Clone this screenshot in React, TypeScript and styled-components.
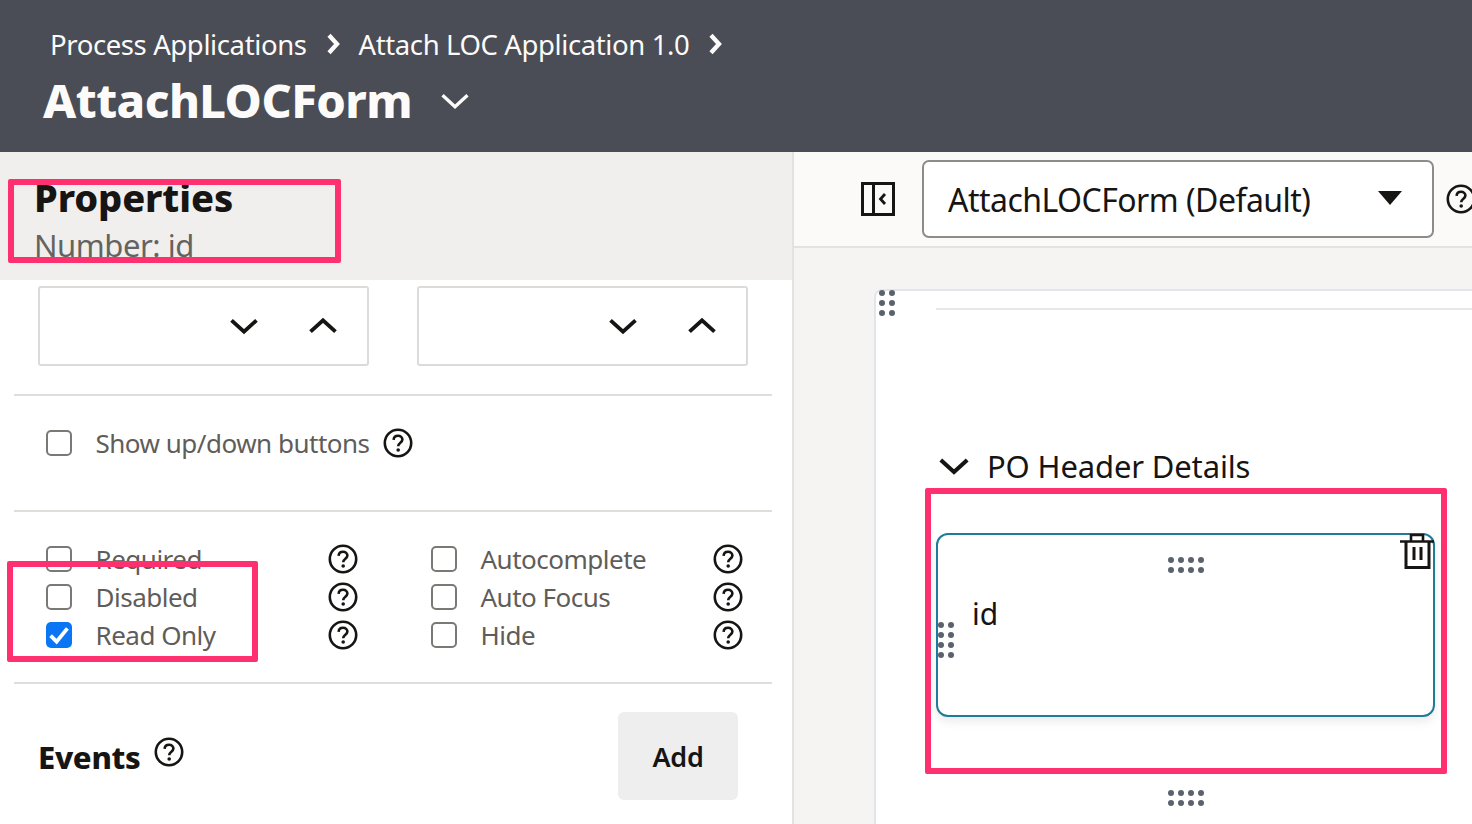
import React from 'react';
import styled, { createGlobalStyle } from 'styled-components';

const GlobalStyle = createGlobalStyle`
  html, body {
    margin: 0;
    padding: 0;
    background: #fff;
    font-family: "Noto Sans", "Open Sans", sans-serif;
    color: #161513;
  }
`;

const Page = styled.div`
  position: relative;
  width: 1472px;
  height: 824px;
  overflow: hidden;
  display: flex;
  flex-direction: column;
`;

const Header = styled.header`
  flex: 0 0 152px;
  box-sizing: border-box;
  height: 152px;
  background: #4a4d55;
  color: #fcfbfa;
  padding: 23px 0 0 43px;
`;

const Crumbs = styled.div`
  display: flex;
  align-items: center;
  height: 42px;
  padding-left: 7px;
  font-size: 27.5px;
  letter-spacing: -0.39px;
  white-space: nowrap;
`;

const CrumbGap = styled.span`
  display: flex;
  width: 52px;
  justify-content: center;
`;

const TitleRow = styled.div`
  display: flex;
  align-items: center;
  height: 70px;
`;

const Title = styled.h1`
  margin: 0;
  font-size: 47px;
  line-height: 70px;
  font-weight: 800;
  letter-spacing: -0.55px;
`;

const TitleCaret = styled.span`
  display: flex;
  margin-left: 26px;
  margin-top: 2px;
`;

const Body = styled.div`
  flex: 1;
  display: flex;
  min-height: 0;
`;

const LeftPane = styled.aside`
  flex: 0 0 792px;
  display: flex;
  flex-direction: column;
  border-right: 2px solid #e4e2e0;
  box-sizing: content-box;
`;

const PaneHead = styled.div`
  flex: 0 0 128px;
  box-sizing: border-box;
  height: 128px;
  background: #f1efed;
  padding: 22px 0 0 34px;
`;

const PaneTitle = styled.div`
  font-size: 38px;
  line-height: 46px;
  font-weight: 800;
  letter-spacing: -0.1px;
`;

const PaneSub = styled.div`
  font-size: 31px;
  line-height: 48px;
  margin-top: 1px;
  letter-spacing: -0.45px;
  color: #65635f;
`;

const PaneBody = styled.div`
  flex: 1;
  background: #fff;
  padding: 6px 20px 0 14px;
`;

const SteppersRow = styled.div`
  display: flex;
  gap: 48px;
  padding: 0 0 28px 24px;
  border-bottom: 2px solid #dfdedb;
`;

const Stepper = styled.div`
  box-sizing: border-box;
  width: 331px;
  height: 80px;
  border: 2px solid #dcdbd9;
  border-radius: 3px;
  display: flex;
  align-items: center;
  justify-content: flex-end;
  gap: 45px;
  padding: 0 27px 0 0;
`;

const ToggleSection = styled.div`
  height: 116px;
  box-sizing: border-box;
  padding: 28px 0 0 32px;
  border-bottom: 2px solid #dfdedb;
`;

const Check = styled.span<{ $checked?: boolean }>`
  box-sizing: border-box;
  flex: 0 0 26px;
  width: 26px;
  height: 26px;
  border-radius: 5px;
  border: ${p => (p.$checked ? 'none' : '2px solid #7b7975')};
  background: ${p => (p.$checked ? '#0a75f5' : '#fff')};
  display: flex;
  align-items: center;
  justify-content: center;
`;

const CheckText = styled.span`
  font-size: 26px;
  letter-spacing: -0.5px;
  color: #5f5d59;
  margin-left: 23.5px;
  white-space: nowrap;
`;

const ToggleRow = styled.div`
  display: flex;
  align-items: center;
  height: 38px;
`;

const Help = styled.span<{ $left?: number }>`
  display: flex;
  margin-left: ${p => p.$left ?? 0}px;
`;

const OptionsGrid = styled.div`
  display: grid;
  grid-template-columns: 385px 340px;
  grid-auto-rows: 38px;
  padding: 28px 0 28px 32px;
  border-bottom: 2px solid #dfdedb;
`;

const OptionCell = styled.div`
  display: flex;
  align-items: center;
  position: relative;
`;

const OptionHelp = styled.span`
  position: absolute;
  left: 282px;
  display: flex;
`;

const EventsRow = styled.div`
  display: flex;
  align-items: flex-start;
  padding: 28px 34px 0 24px;
`;

const EventsTitle = styled.span`
  font-size: 31px;
  line-height: 48px;
  font-weight: 800;
  letter-spacing: -0.3px;
  margin-top: 21px;
`;

const EventsHelp = styled.span`
  display: flex;
  margin: 25px 0 0 13px;
`;

const AddButton = styled.button`
  margin-left: auto;
  width: 120px;
  height: 88px;
  border: none;
  border-radius: 6px;
  background: #eeeeee;
  color: #161513;
  font-family: inherit;
  font-size: 27px;
  font-weight: 600;
  letter-spacing: -0.3px;
`;

const RightPane = styled.main`
  flex: 1;
  min-width: 0;
  display: flex;
  flex-direction: column;
  background: #f5f4f2;
`;

const Toolbar = styled.div`
  flex: 0 0 96px;
  box-sizing: border-box;
  height: 96px;
  display: flex;
  align-items: flex-start;
  background: #fbfaf9;
  border-bottom: 2px solid #e4e2e0;
  padding: 8px 0 0 67px;
`;

const PanelToggle = styled.span`
  display: flex;
  margin-top: 22px;
  margin-right: 27px;
`;

const FormSelect = styled.div`
  box-sizing: border-box;
  flex: 0 0 512px;
  width: 512px;
  height: 78px;
  border: 2px solid #8d8c89;
  border-radius: 7px;
  background: #fff;
  display: flex;
  align-items: center;
  padding: 0 30px 0 24px;
  font-size: 32px;
  letter-spacing: -0.53px;
  white-space: nowrap;
`;

const SelectCaret = styled.span`
  margin-left: auto;
  margin-top: -3px;
  width: 0;
  height: 0;
  border-left: 12px solid transparent;
  border-right: 12px solid transparent;
  border-top: 14px solid #161513;
`;

const ToolbarHelp = styled.span`
  display: flex;
  margin: 24px 0 0 12px;
`;

const Canvas = styled.div`
  flex: 1;
  min-height: 0;
  padding: 41px 0 0 80px;
`;

const FormSheet = styled.div`
  position: relative;
  height: 100%;
  background: #fff;
  border: 2px solid #e1e6ec;
  border-right: none;
  border-bottom: none;
  border-top-left-radius: 8px;
  padding: 17px 0 0 58px;
  box-sizing: border-box;
`;

const SheetRule = styled.div`
  height: 2px;
  background: #e8e8e8;
  margin-left: 2px;
`;

const SectionHead = styled.div`
  display: flex;
  align-items: center;
  height: 48px;
  margin: 132px 0 0 2px;
`;

const SectionTitle = styled.span`
  font-size: 31px;
  letter-spacing: -0.15px;
  margin-left: 15px;
  white-space: nowrap;
`;

const FieldCard = styled.div`
  position: relative;
  box-sizing: border-box;
  width: 499px;
  height: 184px;
  margin: 43px 0 0 2px;
  border: 2px solid #1f7a9c;
  border-radius: 12px;
  background: #fff;
  box-shadow: 0 5px 10px rgba(0, 0, 0, 0.08);
`;

const FieldLabel = styled.span`
  position: absolute;
  left: 34px;
  top: 59px;
  font-size: 30px;
  line-height: 40px;
`;

const Grip = styled.span<{ $cols: number }>`
  display: grid;
  grid-template-columns: repeat(${p => p.$cols}, 6px);
  gap: 4px;
  & > i {
    display: block;
    width: 6px;
    height: 6px;
    border-radius: 50%;
    background: #5b626d;
  }
`;

const SheetGrip = styled.span`
  position: absolute;
  left: 3px;
  top: -1px;
`;

const CardTopGrip = styled.span`
  position: absolute;
  left: 230px;
  top: 22px;
`;

const CardSideGrip = styled.span`
  position: absolute;
  left: 0;
  top: 87px;
`;

const BottomGrip = styled.span`
  position: absolute;
  left: 292px;
  top: 499px;
`;

const TrashSpot = styled.span`
  position: absolute;
  right: -1px;
  top: -3px;
  display: flex;
`;

const Annotation = styled.div<{ $x: number; $y: number; $w: number; $h: number }>`
  position: absolute;
  box-sizing: border-box;
  left: ${p => p.$x}px;
  top: ${p => p.$y}px;
  width: ${p => p.$w}px;
  height: ${p => p.$h}px;
  border: 6px solid #ff3070;
  border-radius: 2px;
  pointer-events: none;
`;

const Chevron = ({ dir, size = 34, w = 3.4, color = '#161513' }: { dir: 'up' | 'down' | 'right'; size?: number; w?: number; color?: string }) => {
  const d = dir === 'up' ? 'M4 20 L15 10 L26 20' : dir === 'down' ? 'M4 10 L15 20 L26 10' : 'M10 4 L20 15 L10 26';
  return (
    <svg width={size} height={size} viewBox="0 0 30 30" fill="none">
      <path d={d} stroke={color} strokeWidth={w} />
    </svg>
  );
};

const HelpIcon = ({ size = 30 }: { size?: number }) => (
  <svg width={size} height={size} viewBox="0 0 30 30" fill="none">
    <circle cx="15" cy="15" r="13.2" stroke="#161513" strokeWidth="2.6" />
    <path d="M10.6 11.8 C10.8 9 12.6 7.8 15 7.8 C17.6 7.8 19.4 9.4 19.4 11.6 C19.4 14.6 15.2 14.8 15.2 18.2" stroke="#161513" strokeWidth="2.6" />
    <circle cx="15.2" cy="22" r="1.8" fill="#161513" />
  </svg>
);

const Tick = () => (
  <svg width="24" height="24" viewBox="0 0 20 20" fill="none">
    <path d="M3 10.5 L8 15.5 L17 4.5" stroke="#fff" strokeWidth="3.2" />
  </svg>
);

const PanelIcon = () => (
  <svg width="34" height="34" viewBox="0 0 34 34" fill="none">
    <rect x="1.5" y="1.5" width="31" height="31" stroke="#161513" strokeWidth="3" />
    <path d="M12.5 1.5 V32.5" stroke="#161513" strokeWidth="3" />
    <path d="M24 12 L19.5 17 L24 22" stroke="#161513" strokeWidth="2.8" />
  </svg>
);

const TrashIcon = () => (
  <svg width="34" height="38" viewBox="0 0 34 38" fill="none">
    <path d="M0 9.5 H34" stroke="#161513" strokeWidth="2.6" />
    <path d="M11 9 V3 H23 V9" stroke="#161513" strokeWidth="2.6" />
    <path d="M6 9.5 V35.5 H29 V9.5" stroke="#161513" strokeWidth="3" />
    <path d="M14 15 V28 M21 15 V28" stroke="#161513" strokeWidth="3" />
  </svg>
);

const Dots = ({ cols, rows }: { cols: number; rows: number }) => (
  <Grip $cols={cols}>
    {Array.from({ length: cols * rows }).map((_, i) => (
      <i key={i} />
    ))}
  </Grip>
);

const options = [
  ['Required', 'Autocomplete'],
  ['Disabled', 'Auto Focus'],
  ['Read Only', 'Hide'],
];

const App: React.FC = () => (
  <>
    <GlobalStyle />
    <Page>
      <Header>
        <Crumbs>
          Process Applications
          <CrumbGap><Chevron dir="right" size={24} w={5.4} color="#fcfbfa" /></CrumbGap>
          Attach LOC Application 1.0
          <CrumbGap><Chevron dir="right" size={24} w={5.4} color="#fcfbfa" /></CrumbGap>
        </Crumbs>
        <TitleRow>
          <Title>AttachLOCForm</Title>
          <TitleCaret><Chevron dir="down" size={34} w={3} color="#fcfbfa" /></TitleCaret>
        </TitleRow>
      </Header>
      <Body>
        <LeftPane>
          <PaneHead>
            <PaneTitle>Properties</PaneTitle>
            <PaneSub>Number: id</PaneSub>
          </PaneHead>
          <PaneBody>
            <SteppersRow>
              {[0, 1].map(i => (
                <Stepper key={i}>
                  <Chevron dir="down" />
                  <Chevron dir="up" />
                </Stepper>
              ))}
            </SteppersRow>
            <ToggleSection>
              <ToggleRow>
                <Check />
                <CheckText>Show up/down buttons</CheckText>
                <Help $left={13}><HelpIcon /></Help>
              </ToggleRow>
            </ToggleSection>
            <OptionsGrid>
              {options.flat().map(label => (
                <OptionCell key={label}>
                  <Check $checked={label === 'Read Only'}>
                    {label === 'Read Only' && <Tick />}
                  </Check>
                  <CheckText>{label}</CheckText>
                  <OptionHelp><HelpIcon /></OptionHelp>
                </OptionCell>
              ))}
            </OptionsGrid>
            <EventsRow>
              <EventsTitle>Events</EventsTitle>
              <EventsHelp><HelpIcon /></EventsHelp>
              <AddButton>Add</AddButton>
            </EventsRow>
          </PaneBody>
        </LeftPane>
        <RightPane>
          <Toolbar>
            <PanelToggle><PanelIcon /></PanelToggle>
            <FormSelect>
              AttachLOCForm (Default)
              <SelectCaret />
            </FormSelect>
            <ToolbarHelp><HelpIcon /></ToolbarHelp>
          </Toolbar>
          <Canvas>
            <FormSheet>
              <SheetGrip><Dots cols={2} rows={3} /></SheetGrip>
              <SheetRule />
              <SectionHead>
                <Chevron dir="down" size={36} w={3.4} />
                <SectionTitle>PO Header Details</SectionTitle>
              </SectionHead>
              <FieldCard>
                <CardTopGrip><Dots cols={4} rows={2} /></CardTopGrip>
                <CardSideGrip><Dots cols={2} rows={4} /></CardSideGrip>
                <FieldLabel>id</FieldLabel>
                <TrashSpot><TrashIcon /></TrashSpot>
              </FieldCard>
              <BottomGrip><Dots cols={4} rows={2} /></BottomGrip>
            </FormSheet>
          </Canvas>
        </RightPane>
      </Body>
      <Annotation $x={8} $y={179} $w={333} $h={84} />
      <Annotation $x={7} $y={561} $w={251} $h={101} />
      <Annotation $x={925} $y={488} $w={522} $h={286} />
    </Page>
  </>
);

export default App;
